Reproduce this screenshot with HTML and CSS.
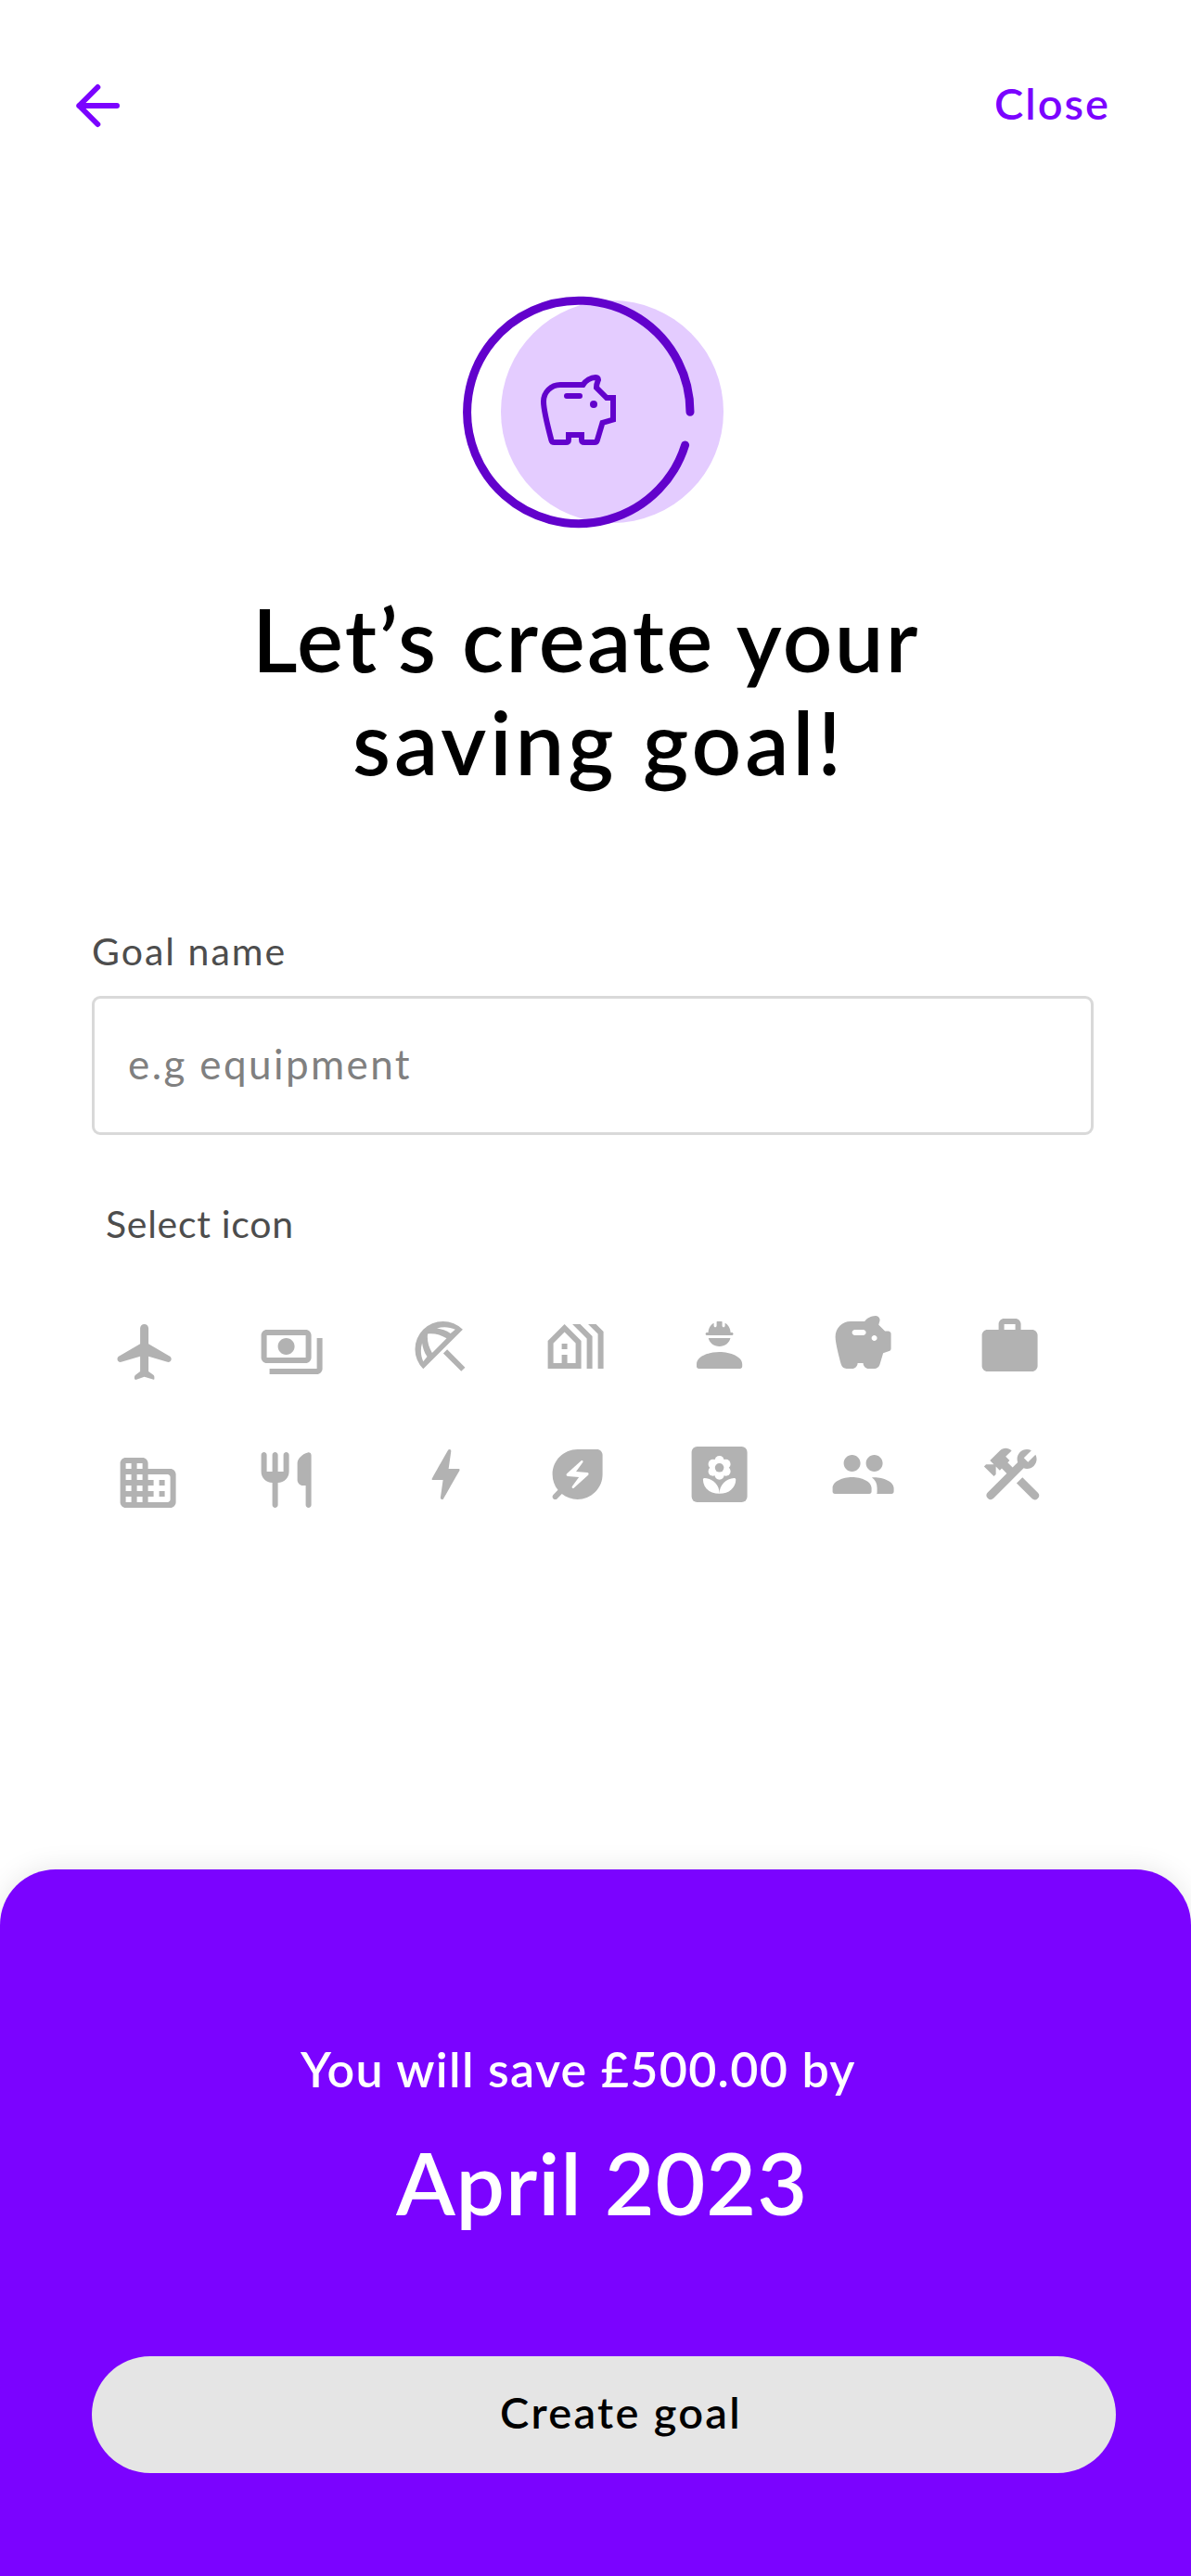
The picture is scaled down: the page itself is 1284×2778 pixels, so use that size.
FILE: index.html
```html
<!DOCTYPE html>
<html lang="en">
    <head>
        <meta charset="utf-8">
        <title>Create saving goal</title>
        <meta name="viewport" content="width=device-width, initial-scale=1.0">
        <link rel="stylesheet" href="styles.css">
    </head>
    <body>
        <header class="header">
            <a class="back" href="#" aria-label="Back">
                <svg width="52" height="60" viewBox="0 0 52 60">
                    <path d="M25.3 14 5.3 34l20 20M5.3 34H46" />
                </svg>
            </a>
            <a class="close" href="#">Close</a>
        </header>

        <main class="content">
            <svg class="hero" width="320" height="290" viewBox="2 0 320 290">
                <circle class="hero-disc" cx="180" cy="144" r="120" />
                <path class="hero-ring" d="M264 144.3A120.2 120.2 0 1 0 258.6 180" />
                <path class="hero-pig" d="M125 115h23.500c3-4.500 8.500-8 13.500-8 3 0 3.500 2 2.500 4-.9 2-1.500 4.500-1.500 7l11 11h7v23.500l-11.500 3.500-5.700 19q-.5 2-2.800 2h-11q-3 0-3-3v-5h-14v5q0 3-3 3h-12.500q-2.500 0-3-2c-4.500-17-8.500-34-8.500-42 0-10 8-18 18-18zM131 127h14" />
                <circle class="hero-eye" cx="160" cy="136" r="4" />
            </svg>

            <h1 class="title">
                <span class="title-top">Let’s create your</span>
                <span class="title-bottom">saving goal!</span>
            </h1>

            <label class="label" for="goal">Goal name</label>
            <input class="input" id="goal" type="text" placeholder="e.g equipment">

            <div class="label label-icons">Select icon</div>
            <div class="icons">
                <svg class="icon flight" viewBox="0 0 24 24"><path d="M13.500 9V3.500C13.500 2.670 12.830 2 12 2s-1.500.67-1.500 1.500V9.100l-7.700 4.500c-.3.200-.5.550-.5.950 0 .75.7 1.200 1.400 1.050l6.800-2V19l-1.650 1.250c-.25.200-.4.450-.4.750v.4c0 .4.300.65.7.55L12 20.900l3.350 1.050c.2 0 .250-.15.250-.35v-.6c0-.3-.1-.55-.35-.75L13.500 19v-5.400l6.800 2c.7.150 1.400-.3 1.400-1.050 0-.4-.2-.75-.5-.95L13.500 9.100z" /></svg>
                <svg class="icon payments" viewBox="0 0 24 24"><path d="M19 14V6c0-1.100-.9-2-2-2H3c-1.100 0-2 .9-2 2v8c0 1.100.9 2 2 2h14c1.100 0 2-.9 2-2zm-2 0H3V6h14v8zm-7-7c-1.660 0-3 1.340-3 3s1.340 3 3 3 3-1.340 3-3-1.340-3-3-3zm13 0v11c0 1.100-.9 2-2 2H4v-2h17V7h2z" /></svg>
                <svg class="icon beach" viewBox="0 0 24 24"><path d="M20.100 5.900A10 10 0 0 0 5.900 20.100zM10.800 5.500C13 4.800 15.400 5 17.400 5.900L15.700 7.300C14.200 6.300 12.500 5.700 10.800 5.500zM5.500 10.800C5.700 12.500 6.300 14.200 7.300 15.700L5.900 17.400C5 15.400 4.800 13 5.500 10.800zM7.500 7.500C9.800 7.200 12.200 7.800 14.300 9.100L9.100 14.300C7.800 12.200 7.200 9.800 7.500 7.500zM14.500 13.100l6.450 6.450-1.400 1.400L13.100 14.500z" /></svg>
                <svg class="icon village" viewBox="0 0 24 24"><path d="M18 20V8.350L13.650 4h-2.830L16 9.180V20h2zm4 0V6.690L19.310 4h-2.830L20 7.520V20h2zM8 4l-6 6v10h12V10L8 4zm4 14H9v-3H7v3H4v-7.170l4-4 4 4V18zm-3-5H7v-2h2v2z" /></svg>
                <svg class="icon engineer" viewBox="0 0 24 24"><path d="M12 14c-4 0-8.200 1.700-8.200 4.300v.9c0 .45.350.8.8.8h14.800c.45 0 .8-.35.8-.8v-.9c0-2.600-4.200-4.300-8.200-4.300zM8.050 9c.3 1.700 2 3 3.950 3s3.650-1.300 3.950-3zM7.500 8h9c.25 0 .5-.2.5-.5s-.25-.5-.5-.5H16c0-1.500-.8-2.750-2-3.450V4.600c0 .3-.2.500-.5.500s-.5-.2-.5-.5V3.200c0-.1-.1-.2-.2-.2h-1.600c-.1 0-.2.100-.2.200v1.400c0 .3-.2.500-.5.500s-.5-.2-.5-.5V3.550C8.800 4.250 8 5.500 8 7h-.5c-.25 0-.5.200-.5.500s.25.500.5.500z" /></svg>
                <svg class="icon savings" viewBox="0 0 24 24"><path d="M19.830 7.500l-2.270-2.270c.07-.42.180-.81.320-1.150.11-.26.150-.56.090-.87C17.840 2.490 17.140 1.990 16.400 2c-1.590.03-3 .81-3.900 2h-5C4.460 4 2 6.460 2 9.500c0 2.250 1.370 7.480 2.080 10.040.24.860 1.030 1.460 1.920 1.460H8c1.100 0 2-.9 2-2h2c0 1.100.9 2 2 2h2.010c.88 0 1.660-.58 1.920-1.430l1.250-4.160 2.140-.72c.41-.14.680-.52.680-.95V8.500c0-.55-.45-1-1-1h-1.170zM12 9H9c-.55 0-1-.45-1-1s.45-1 1-1h3c.55 0 1 .45 1 1s-.45 1-1 1zm4 2c-.55 0-1-.45-1-1s.45-1 1-1 1 .45 1 1-.45 1-1 1z" /></svg>
                <svg class="icon work" viewBox="0 0 24 24"><path d="M20 6h-4V4c0-1.110-.89-2-2-2h-4c-1.110 0-2 .89-2 2v2H4c-1.110 0-2 .89-2 2v11c0 1.110.89 2 2 2h16c1.110 0 2-.89 2-2V8c0-1.110-.89-2-2-2zm-6 0h-4V4h4v2z" /></svg>

                <svg class="icon domain" viewBox="0 0 24 24"><path d="M12 7V5c0-1.100-.9-2-2-2H4c-1.100 0-2 .9-2 2v14c0 1.100.9 2 2 2h16c1.100 0 2-.9 2-2V9c0-1.100-.9-2-2-2h-8zM6 19H4v-2h2v2zm0-4H4v-2h2v2zm0-4H4V9h2v2zm0-4H4V5h2v2zm4 12H8v-2h2v2zm0-4H8v-2h2v2zm0-4H8V9h2v2zm0-4H8V5h2v2zm9 12h-7v-2h2v-2h-2v-2h2v-2h-2V9h7c.55 0 1 .45 1 1v8c0 .55-.45 1-1 1zm-1-8h-2v2h2v-2zm0 4h-2v2h2v-2z" /></svg>
                <svg class="icon restaurant" viewBox="0 0 24 24"><path d="M16 6v6c0 1.100.9 2 2 2h1v7c0 .55.450 1 1 1s1-.45 1-1V3.130c0-.65-.61-1.130-1.240-.98C17.600 2.680 16 4.510 16 6zm-5 3H9V3c0-.55-.45-1-1-1s-1 .45-1 1v6H5V3c0-.55-.45-1-1-1s-1 .45-1 1v6c0 2.210 1.790 4 4 4v8c0 .55.450 1 1 1s1-.45 1-1v-8c2.210 0 4-1.790 4-4V3c0-.55-.45-1-1-1s-1 .45-1 1v6z" /></svg>
                <svg class="icon bolt" viewBox="0 0 24 24"><path d="M10.670 21c-.35 0-.62-.31-.57-.66L11 14H7.500c-.88 0-.33-.75-.31-.78 1.260-2.230 3.150-5.530 5.650-9.930.1-.18.300-.29.500-.29.350 0 .62.310.57.660l-.9 6.340h3.510c.4 0 .62.190.4.660-3.290 5.740-5.200 9.090-5.750 10.050-.1.180-.29.290-.5.290z" /></svg>
                <svg class="icon leaf" viewBox="0 0 24 24"><path d="M12 3c-4.800 0-9 3.860-9 9 0 2.120.74 4.070 1.970 5.610L3.290 19.300c-.39.390-.39 1.020 0 1.410s1.020.39 1.410 0l1.690-1.690C7.930 20.260 9.880 21 12 21c2.300 0 4.610-.88 6.360-2.640S21 14.300 21 12V5c0-1.100-.9-2-2-2h-7zm3.830 9.260-5.160 4.630c-.16.150-.41.140-.56-.01-.14-.14-.16-.36-.04-.52l2.440-3.330-4.050-.4c-.44-.04-.63-.59-.3-.89l5.160-4.630c.16-.15.410-.14.560.01.140.14.160.36.040.52l-2.440 3.330 4.050.4c.45.040.63.590.3.890z" /></svg>
                <svg class="icon florist" viewBox="0 0 24 24">
                    <rect x="2" y="2" width="20" height="20" rx="2" />
                    <g class="cut">
                        <circle cx="12" cy="7" r="1.700" /><circle cx="12" cy="12.200" r="1.700" />
                        <circle cx="9.700" cy="8.300" r="1.700" /><circle cx="14.300" cy="8.300" r="1.700" />
                        <circle cx="9.700" cy="10.900" r="1.700" /><circle cx="14.300" cy="10.900" r="1.700" />
                        <path d="M12 18.950C8.500 18.950 6.200 16.800 6.100 13.900c0-.4.2-.65.6-.6C9.600 13.600 12 15.600 12 18.950zM12 18.950C15.500 18.950 17.800 16.800 17.900 13.900c0-.4-.2-.65-.6-.6C14.400 13.600 12 15.600 12 18.950z" />
                    </g>
                    <circle cx="12" cy="9.600" r="1.600" />
                </svg>
                <svg class="icon group" viewBox="0 0 24 24"><path d="M16 11c1.660 0 3-1.340 3-3s-1.340-3-3-3-3 1.340-3 3 1.340 3 3 3zm-8 0c1.660 0 3-1.340 3-3S9.660 5 8 5 5 6.340 5 8s1.340 3 3 3zm0 2c-3.300 0-7 1.500-7 3.900v1.300c0 .45.350.8.800.8h12.400c.45 0 .8-.35.8-.8v-1.300C15 14.500 11.300 13 8 13zm7.100.1c1.200.9 1.900 2.100 1.900 3.800v1.300c0 .3 0 .5-.1.800h5.300c.45 0 .8-.35.8-.8v-1.300c0-2.500-4.400-4.100-7.900-3.800z" /></svg>
                <svg class="icon tools" viewBox="0 0 24 24"><path d="M13.780 15.170l2.120-2.120 5.530 5.500a1.500 1.500 0 0 1-2.120 2.120zM17.500 10c1.930 0 3.500-1.570 3.500-3.500 0-.58-.16-1.120-.41-1.600l-2.700 2.700-1.490-1.490 2.700-2.700c-.48-.25-1.020-.41-1.600-.41C15.570 3 14 4.570 14 6.500c0 .41.080.8.210 1.160l-1.850 1.850-1.780-1.780.71-.71-1.410-1.410L12 3.490c-1.170-1.170-3.070-1.170-4.240 0L4.220 7.030l1.410 1.410H2.810l-.71.710 3.540 3.540.71-.71V9.150l1.410 1.410.71-.71 1.780 1.780-6.850 6.850a1.500 1.500 0 0 0 2.120 2.120L16.340 9.790c.36.130.75.210 1.160.210z" /></svg>
            </div>
        </main>

        <section class="summary">
            <p class="summary-text">You will save £500.00 by</p>
            <p class="summary-date">April 2023</p>
            <button class="create">Create goal</button>
        </section>
    </body>
</html>
```
FILE: styles.css
```css
* {
    box-sizing: border-box;
}

html, body {
    margin: 0;
    padding: 0;
}

body {
    width: 1284px;
    height: 2778px;
    display: flex;
    flex-direction: column;
    background-color: #fff;
    font-family: Lato, sans-serif;
    overflow: hidden;
}

.header {
    display: flex;
    justify-content: space-between;
    padding: 80px 87px 0 80px;
}

.back svg {
    display: block;
    fill: none;
    stroke: #7b03ff;
    stroke-width: 6;
    stroke-linecap: round;
    stroke-linejoin: round;
}

.close {
    color: #7b03ff;
    font-size: 47px;
    font-weight: 600;
    line-height: 62px;
    letter-spacing: 2px;
    text-decoration: none;
    height: 60px;
}

.content {
    display: flex;
    flex-direction: column;
    padding: 160px 105px 0 99px;
}

.hero {
    margin-left: 383px;
}

.hero-disc {
    fill: #e4ccff;
}

.hero-ring {
    fill: none;
    stroke: #6202cc;
    stroke-width: 9;
    stroke-linecap: round;
}

.hero-pig {
    fill: none;
    stroke: #6202cc;
    stroke-width: 6;
    stroke-linecap: round;
}

.hero-eye {
    fill: #6202cc;
}

.title {
    margin: 43px 0 0;
    color: #000;
    font-size: 94px;
    font-weight: 600;
    line-height: 111px;
}

.title span {
    display: block;
}

.title-top {
    padding-left: 173px;
    letter-spacing: 2.3px;
}

.title-bottom {
    padding-left: 281px;
    letter-spacing: 4px;
}

.label {
    margin-top: 146px;
    color: #4d4d4d;
    font-size: 41px;
    line-height: 50px;
    letter-spacing: 2px;
}

.label-icons {
    margin-top: 71px;
    padding-left: 15px;
    letter-spacing: 0.7px;
}

.input {
    width: 1080px;
    height: 150px;
    margin-top: 23px;
    padding: 0 36px 5px;
    border: 3px solid #d9d9d9;
    border-radius: 9px;
    background-color: transparent;
    font-family: inherit;
    font-size: 44px;
    letter-spacing: 2.4px;
}

.input::placeholder {
    color: #808080;
    opacity: 1;
}

.icons {
    display: grid;
    grid-template-columns: 159px 159.5px 146.4px 155px 155.6px 158px 73.2px;
    grid-template-rows: 141px 100px;
    align-items: start;
    margin-top: 68px;
    padding-left: 20px;
}

.icon {
    width: 73.2px;
    height: 72px;
    margin-top: 3px;
    fill: #b2b2b2;
}

.icon path {
    fill-rule: evenodd;
}

.icon .cut {
    fill: #fff;
}

.flight, .payments, .domain {
    margin-top: 9px;
}

.savings, .bolt, .leaf, .florist, .group, .tools {
    margin-top: 0;
}

.restaurant {
    margin-top: 6px;
    margin-left: -6px;
}

.bolt {
    margin-left: 6px;
}

.domain {
    margin-left: 4px;
}

.leaf {
    margin-left: 2px;
}

.tools {
    margin-left: 2px;
}

.summary {
    height: 762px;
    margin-top: auto;
    padding: 185px 81px 0 99px;
    display: flex;
    flex-direction: column;
    background-color: #7b03ff;
    border-radius: 60px 60px 0 0;
    box-shadow: 0 0 30px rgba(0, 0, 0, 0.1);
    color: #fff;
    font-weight: 600;
}

.summary-text {
    margin: 0;
    padding-left: 225px;
    font-size: 52px;
    line-height: 60px;
    letter-spacing: 1.3px;
}

.summary-date {
    margin: 37px 0 0;
    padding-left: 328px;
    font-size: 93px;
    line-height: 110px;
    letter-spacing: 0.9px;
}

.create {
    height: 126px;
    margin: 133px 0 0;
    padding: 0 0 6px 37px;
    border: none;
    border-radius: 63px;
    background-color: #e5e5e5;
    color: #000;
    font-family: inherit;
    font-size: 47px;
    font-weight: 600;
    letter-spacing: 2.3px;
}
```
